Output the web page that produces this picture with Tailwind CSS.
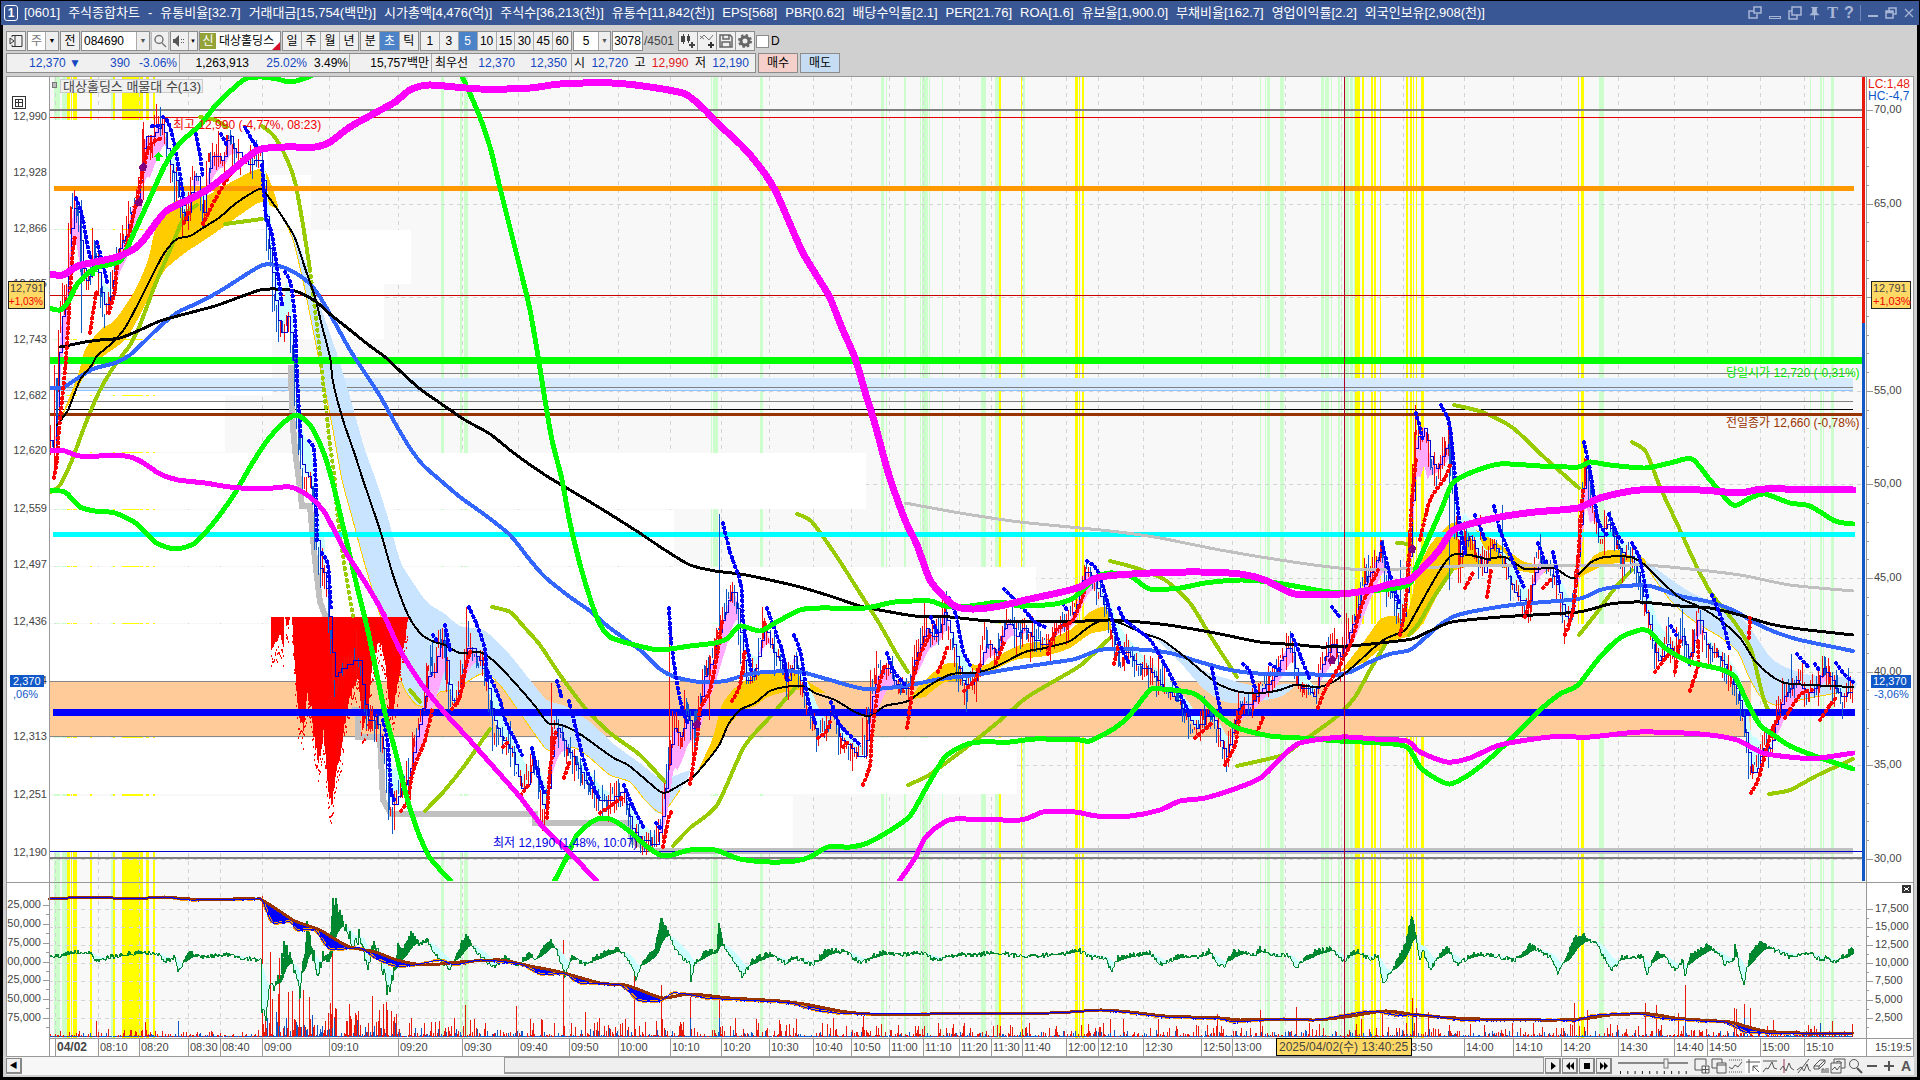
<!DOCTYPE html>
<html lang="ko">
<head>
  <meta charset="UTF-8">
  <meta name="viewport" content="width=device-width, initial-scale=1.0">
  <title>[0601] 주식종합차트</title>
  <script src="https://cdn.jsdelivr.net/npm/@tailwindcss/browser@4"></script>
</head>
<body class="bg-black font-['Liberation_Sans','Noto_Sans_CJK_KR',sans-serif] text-xs text-black">
  <div class="bg-black pt-px pb-[3px]">
    <!-- title bar -->
    <header class="mx-px flex h-6 items-center bg-[#3a5795] pl-[3px] pr-1 text-white">
      <span class="flex h-4 w-[14px] items-center justify-center rounded-[3px] border border-white font-bold leading-none">1</span>
      <h1 class="ml-[6px] flex flex-1 gap-2 overflow-hidden whitespace-nowrap text-[13px] leading-5">
        <span>[0601]</span><span>주식종합차트</span><span>-</span><span>유통비율[32.7]</span><span>거래대금[15,754(백만)]</span><span>시가총액[4,476(억)]</span><span>주식수[36,213(천)]</span><span>유통수[11,842(천)]</span><span>EPS[568]</span><span>PBR[0.62]</span><span>배당수익률[2.1]</span><span>PER[21.76]</span><span>ROA[1.6]</span><span>유보율[1,900.0]</span><span>부채비율[162.7]</span><span>영업이익률[2.2]</span><span>외국인보유[2,908(천)]</span>
      </h1>
      <div class="flex items-center gap-[6px] text-[#a9b7d6]">
        <button aria-label="팝업"><svg class="size-[14px]" viewBox="0 0 14 14" fill="none" stroke="currentColor" stroke-width="1.5"><path d="M6 1h7v6H6zM6 5H1v7h8V8"/></svg></button>
        <button aria-label="접기"><svg class="size-[14px]" viewBox="0 0 14 14" fill="none" stroke="currentColor"><rect x="1.500" y="10.500" width="11" height="2"/></svg></button>
        <button aria-label="복사"><svg class="size-[14px]" viewBox="0 0 14 14" fill="none" stroke="currentColor" stroke-width="1.500"><path d="M4 1h9v8H4zM4 5H1v8h8V9"/></svg></button>
        <button aria-label="고정"><svg class="size-[13px]" viewBox="0 0 13 14" fill="currentColor"><path d="M3 0h7v1H9v5l3 3H7v5H6V9H1l3-3V1H3z"/></svg></button>
        <button class="w-[11px] font-['Liberation_Serif',serif] text-base font-bold leading-4">T</button>
        <button class="w-[10px] text-base font-bold leading-4">?</button>
        <span class="h-4 w-px bg-[#7186b5]"></span>
        <button aria-label="최소화"><svg class="size-3" viewBox="0 0 12 12" fill="currentColor"><rect x="1" y="8" width="10" height="2"/></svg></button>
        <button aria-label="복원"><svg class="size-3" viewBox="0 0 12 12" fill="none" stroke="currentColor" stroke-width="1.500"><path d="M4 4V1h7v6H8M1 4h7v7H1zM1 5.500h7"/></svg></button>
        <button aria-label="닫기"><svg class="size-3" viewBox="0 0 12 12" fill="none" stroke="currentColor" stroke-width="1.200"><path d="M2 2l8 8M10 2l-8 8"/></svg></button>
      </div>
    </header>

    <div class="ml-[3px] mr-[3px] bg-[#d0d0d0] pl-[3px] pr-[3px] pb-[2px]">
      <!-- toolbar -->
      <div class="flex h-[28px] items-center gap-px pt-1 [&_button]:shrink-0">
        <button aria-label="메뉴" class="flex h-5 w-5 items-center justify-center border border-[#8c8c8c] bg-[#f0f0f0]"><svg class="size-[14px]" viewBox="0 0 14 14" fill="none" stroke="#333"><path d="M3 3V1.500h10v11H3V11M6 1.500v11M1 4l4 3-4 3z"/></svg></button>
        <div class="flex h-5 w-8 border border-[#8c8c8c] bg-white"><span class="w-[17px] text-center leading-[18px] text-[#777]">주</span><button aria-label="구분 선택" class="flex-1 border-l border-[#aaa] bg-[#eee] text-[7px]">▼</button></div>
        <button class="h-5 w-5 border border-[#8c8c8c] bg-[#f0f0f0] leading-[18px]">전</button>
        <div class="flex h-5 w-[69px] border border-[#8c8c8c] bg-white"><input aria-label="종목코드" value="084690" class="w-[54px] pl-[2px] text-xs outline-none"><button aria-label="종목 선택" class="flex-1 border-l border-[#aaa] bg-[#eee] text-[7px] text-[#555]">▼</button></div>
        <button aria-label="검색" class="flex h-5 w-[18px] items-center justify-center border border-[#bbb] bg-[#f0f0f0]"><svg class="size-[14px]" viewBox="0 0 14 14" fill="none" stroke="#777" stroke-width="1.500"><circle cx="6" cy="5.500" r="4"/><path d="M9 9l4 4"/></svg></button>
        <div class="flex h-5 w-[28px] border border-[#8c8c8c] bg-[#f0f0f0]"><button aria-label="소리" class="w-[17px]"><svg class="ml-px size-[14px]" viewBox="0 0 14 14" fill="#555"><path d="M1 5h2l4-4v12L3 9H1zM9 5h1v1H9zM9 8h1v1H9zM11 5h1v1h-1zM11 8h1v1h-1z"/></svg></button><button aria-label="소리 선택" class="flex-1 border-l border-[#aaa] text-[6px]">▼</button></div>
        <div class="relative flex h-5 w-[82px] items-center overflow-hidden whitespace-nowrap border border-[#8c8c8c] bg-white"><span class="h-4 w-4 shrink-0 bg-[#93a338] text-center leading-4 text-white">신</span><span class="ml-[3px]">대상홀딩스</span><svg class="absolute bottom-0 right-0 size-2" viewBox="0 0 8 8"><path d="M8 0v8H0z" fill="#d8102a"/></svg></div>
        <div class="flex h-5 w-[77px] divide-x divide-[#aaa] border border-[#8c8c8c] bg-[#f0f0f0] *:flex-1 *:leading-[18px]"><button>일</button><button>주</button><button>월</button><button>년</button></div>
        <div class="flex h-5 w-[59px] divide-x divide-[#aaa] border border-[#8c8c8c] bg-[#f0f0f0] *:flex-1 *:leading-[18px]"><button>분</button><button class="bg-[#4c83c8] text-white">초</button><button>틱</button></div>
        <div class="flex h-5 w-[152px] divide-x divide-[#aaa] border border-[#8c8c8c] bg-[#f0f0f0] *:flex-1 *:leading-[18px]"><button>1</button><button>3</button><button class="bg-[#4c83c8] text-white">5</button><button>10</button><button>15</button><button>30</button><button>45</button><button>60</button></div>
        <div class="flex h-5 w-[38px] border border-[#8c8c8c] bg-white"><input aria-label="간격" value="5" class="w-6 text-center text-xs outline-none"><button aria-label="간격 선택" class="flex-1 border-l border-[#aaa] bg-[#eee] text-[7px] text-[#555]">▼</button></div>
        <input aria-label="조회 개수" value="3078" class="h-5 w-[31px] border border-[#8c8c8c] bg-white text-center text-xs outline-none">
        <span class="w-[33px] text-[#444]">/4501</span>
        <div class="flex h-5 w-[77px] divide-x divide-[#999] border border-[#8c8c8c] bg-[#f0f0f0] *:flex *:flex-1 *:items-center *:justify-center">
          <button aria-label="봉 추가"><svg class="size-4" viewBox="0 0 16 16" fill="#444"><path d="M1 3h4v6H1zM3 1h1v10H3zM7 3h3v5H7zM8 1h1v9H8zM11 9h2v2h2v2h-2v2h-2v-2H9v-2h2z"/></svg></button>
          <button aria-label="지표 추가"><svg class="size-4" viewBox="0 0 16 16" fill="none" stroke="#777"><path d="M1 6l4-4 5 5 4-5M1 3l4 3"/><path d="M12 9v6M9 12h6" stroke="#333" stroke-width="2"/></svg></button>
          <button aria-label="저장"><svg class="size-4" viewBox="0 0 16 16" fill="none" stroke="#666" stroke-width="1.500"><path d="M2 2h10l2 2v10H2zM5 2v4h6V2M4 14V9h8v5"/></svg></button>
          <button aria-label="설정"><svg class="size-4" viewBox="0 0 16 16" fill="none" stroke="#666"><circle cx="8" cy="8" r="4" stroke-width="3"/><circle cx="8" cy="8" r="6" stroke-width="2" stroke-dasharray="2.400 2.300"/></svg></button>
        </div>
        <label class="flex items-center gap-[2px]"><input type="checkbox" class="size-[13px] appearance-none border border-[#8c8c8c] bg-white">D</label>
      </div>

      <!-- quote line -->
      <div class="flex h-[23px] gap-[2px] pb-[3px] text-xs leading-[18px] text-[#1548c0]">
        <div class="flex w-[750px] shrink-0 divide-x divide-[#aaa] whitespace-nowrap border border-[#8c8c8c] bg-[#f0f0f0]">
          <div class="flex w-[173px] justify-end pr-[2px]"><span>12,370 ▼</span><span class="w-[49px] text-right">390</span><span class="w-[47px] text-right">-3.06%</span></div>
          <div class="flex w-[170px] justify-end pr-[1px]"><span class="text-black">1,263,913</span><span class="w-[58px] text-right">25.02%</span><span class="w-[41px] text-right text-black">3.49%</span></div>
          <div class="w-[82px] pr-[2px] text-right text-black">15,757백만</div>
          <div class="flex w-[140px] justify-end pr-1"><span class="flex-1 pl-[3px] text-black">최우선</span><span>12,370</span><span class="w-[52px] text-right">12,350</span></div>
          <div class="flex flex-1 justify-between pl-[2px] pr-[6px]"><span class="text-black">시</span><span>12,720</span><span class="text-black">고</span><span class="text-[#e01818]">12,990</span><span class="text-black">저</span><span>12,190</span></div>
        </div>
        <button class="h-5 w-10 border border-[#8c8c8c] bg-[#f5d0cb] text-black">매수</button>
        <button class="h-5 w-10 border border-[#8c8c8c] bg-[#c5dcf2] text-black">매도</button>
      </div>

      <!-- chart -->
      <svg id="chart" class="block h-auto w-full" viewBox="6 76 1908 981" shape-rendering="crispEdges">
        <rect x="6" y="76" width="1908" height="981" fill="#fff"/>
        <rect x="49" y="77" width="1818" height="961" fill="#f8f8f8"/>
        <g id="back"></g>
        <clipPath id="plot"><rect x="49" y="77" width="1813" height="804"/></clipPath>
        <g id="main" clip-path="url(#plot)"></g>
        <g id="sub"></g>
        <g fill="none" stroke="#999" stroke-width="1"><path d="M6.500 76.500h1907v980H6.500zM49.500 77v980M1866.500 77v980M6 882.500h1907M49 1038.500h1864"/></g>
        <rect x="1862" y="77" width="3" height="246" fill="#e81a0c"/>
        <rect x="1862" y="323" width="3" height="558" fill="#1058c8"/>
        <g id="labels"></g>
      </svg>

      <!-- scroll bar and drawing tools -->
      <footer class="flex h-[18px] items-center bg-[#f0f0f0] [&_button]:shrink-0">
        <button class="h-4 w-4 border border-r-2 border-b-2 border-[#888] bg-[#f0f0f0] text-[8px] leading-none">◀</button>
        <div class="flex h-full flex-1 bg-[#f7f7f7] pl-[482px]"><div class="h-[17px] flex-1 border border-b-2 border-[#999] bg-[#efefef]"></div></div>
        <div class="flex gap-px pl-px">
          <button class="flex h-4 w-4 items-center justify-center border border-r-2 border-b-2 border-[#888]" aria-label="재생"><svg class="size-2" viewBox="0 0 8 8"><path d="M2 0l5 4-5 4z"/></svg></button>
          <button class="flex h-4 w-4 items-center justify-center border border-r-2 border-b-2 border-[#888]" aria-label="뒤로"><svg class="size-2" viewBox="0 0 8 8"><path d="M4 0v8L0 4zM8 0v8L4 4z"/></svg></button>
          <button class="flex h-4 w-4 items-center justify-center border border-r-2 border-b-2 border-[#888]" aria-label="정지"><svg class="size-[6px]" viewBox="0 0 6 6"><path d="M0 0h6v6H0z"/></svg></button>
          <button class="flex h-4 w-4 items-center justify-center border border-r-2 border-b-2 border-[#888]" aria-label="앞으로"><svg class="size-2" viewBox="0 0 8 8"><path d="M0 0l4 4-4 4zM4 0l4 4-4 4z"/></svg></button>
        </div>
        <svg class="mx-[6px] h-[18px] w-[70px]" viewBox="0 0 70 18"><path d="M0 5h70v2H0z" fill="#888"/><rect x="46" y="2" width="4" height="9" fill="#eee" stroke="#777"/><path d="M2.500 14v3m7.300-3v3m7.300-3v3m7.300-3v3m7.300-3v3m7.300-3v3m7.300-3v3m7.300-3v3m7.300-3v3m7.300-3v3" stroke="#222"/></svg>
        <div class="flex w-[220px] justify-between text-[#555] [&_svg]:size-4 [&_svg]:fill-none [&_svg]:stroke-current">
          <button aria-label="차트 추가"><svg viewBox="0 0 16 16"><path d="M9 12H1V1h11v6M8 8h7v7H8zM11.500 8v7M8 11.500h7"/></svg></button>
          <button aria-label="차트 겹침"><svg viewBox="0 0 16 16"><path d="M6 10H1V1h10v4"/><path d="M6 5h9v10H6zM6 7h9"/></svg></button>
          <button aria-label="영역"><svg viewBox="0 0 16 16"><path d="M1 2h14M1 14h14" stroke-dasharray="1 1"/><path d="M1 9l3 2 3-4 3 2 4-5"/></svg></button>
          <button aria-label="십자선" class="bg-white"><svg viewBox="0 0 16 16"><path d="M1 4h14M4 1v14M8 8l6 6M8 13V8h5"/></svg></button>
          <button aria-label="수평선"><svg viewBox="0 0 16 16"><path d="M1 3h14M1 14l3-4 2 1 4-7 2 6 3 1"/></svg></button>
          <button aria-label="수직선"><svg viewBox="0 0 16 16"><path d="M5 1v14" stroke="#a03060"/><path d="M1 12l3-4 3 5 3-8 2 5 3 2"/></svg></button>
          <button aria-label="추세선"><svg viewBox="0 0 16 16"><path d="M2 15L13 1M1 12l4-3 3 4 3-7 2 6 2 1"/></svg></button>
          <button aria-label="지우기"><svg viewBox="0 0 16 16"><path d="M1 8l6-6h5l-6 6zM1 8v3h5l6-6V2M6 8v3M9 15v-4h2v4M13 10v5M15 10v5"/></svg></button>
          <button aria-label="그림 저장"><svg viewBox="0 0 16 16"><path d="M4 5V1h11v9h-4M1 5h10v10H1zM2 12l3-3 2 3 3-4M6 4l3-1 3 2"/></svg></button>
          <button aria-label="확대경"><svg viewBox="0 0 16 16"><circle cx="7" cy="6" r="4.500"/><path d="M10 10l5 5" stroke-width="2"/></svg></button>
          <button aria-label="축소"><svg viewBox="0 0 16 16"><path d="M3 8h10" stroke-width="2"/></svg></button>
          <button aria-label="확대"><svg viewBox="0 0 16 16"><path d="M3 8h10M8 3v10" stroke-width="2"/></svg></button>
          <button class="w-4 text-sm font-bold leading-4">A</button>
        </div>
      </footer>
    </div>
  </div>

  <script>
    const back = [], main = [], sub = [], labels = [];

    // repeatable noise
    let seed = 7;
    function rnd() { seed = (seed * 16807) % 2147483647; return seed / 2147483647; }

    function parse(s) { return s.trim().split(/\s+/).map(p => p.split(',').map(Number)); }

    function smooth(pts) {
      let d = `M${pts[0]}`;
      for (let i = 0; i < pts.length - 1; i++) {
        const a = pts[i - 1] || pts[i], b = pts[i], c = pts[i + 1], e = pts[i + 2] || c;
        d += `C${b[0] + (c[0] - a[0]) / 8},${b[1] + (c[1] - a[1]) / 8} ${c[0] - (e[0] - b[0]) / 8},${c[1] - (e[1] - b[1]) / 8} ${c}`;
      }
      return d;
    }
    function curve(out, s, color, w, extra = '') {
      out.push(`<path d="${smooth(parse(s))}" fill="none" stroke="${color}" stroke-width="${w}" stroke-linecap="round" stroke-linejoin="round" ${extra}/>`);
    }
    function area(s, color) { main.push(`<path d="${smooth(parse(s))}Z" fill="${color}"/>`); }
    function rect(out, x, y, w, h, color) { out.push(`<rect x="${x}" y="${y}" width="${w}" height="${h}" fill="${color}"/>`); }
    function text(x, y, s, color, extra = '', size = 11) { labels.push(`<text x="${x}" y="${y}" fill="${color}" font-size="${size}" ${extra}>${s}</text>`); }
    function sample(s, step) {
      const p = parse(s), out = [];
      let k = 0;
      for (let x = p[0][0]; x <= p[p.length - 1][0]; x += step) {
        while (k < p.length - 2 && x > p[k + 1][0]) k++;
        const [a, b] = [p[k], p[k + 1]];
        out.push([x, a[1] + (b[1] - a[1]) * (x - a[0]) / (b[0] - a[0])]);
      }
      return out;
    }

    // signal strips: x, width
    const GREEN = '54,6 62,5 111,2 441,3 460,2 464,4 711,1 713,5 760,3 881,3 886,1 904,2 920,1 922,6 929,1 942,1 981,5 995,4 1023,2 1260,1 1265,1 1267,3 1280,4 1321,3 1325,4 1331,1 1338,2 1341,1 1345,4 1350,3 1354,1 1599,5 1810,1 1820,2 1823,1 1831,3';
    const YELLOW = '67,3 71,1 73,4 90,2 113,2 122,21 146,3 153,2 999,2 1021,1 1075,3 1079,1 1082,2 1355,5 1362,2 1371,2 1374,2 1380,1 1406,2 1410,2 1413,1 1416,1 1421,3 1578,1 1581,3';
    parse(GREEN).forEach(([x, w]) => rect(back, x, 77, w, 961, '#ccffcc'));
    parse(YELLOW).forEach(([x, w]) => rect(back, x, 77, w, 961, '#ffff00'));

    const TIMES = [[55,'04/02'],[98,'08:10'],[139,'08:20'],[188,'08:30'],[220,'08:40'],[262,'09:00'],[329,'09:10'],[398,'09:20'],[462,'09:30'],[518,'09:40'],[569,'09:50'],[618,'10:00'],[670,'10:10'],[721,'10:20'],[769,'10:30'],[813,'10:40'],[851,'10:50'],[889,'11:00'],[923,'11:10'],[959,'11:20'],[991,'11:30'],[1022,'11:40'],[1066,'12:00'],[1098,'12:10'],[1143,'12:30'],[1201,'12:50'],[1232,'13:00'],[1285,''],[1341,''],[1403,'13:50'],[1464,'14:00'],[1513,'14:10'],[1561,'14:20'],[1618,'14:30'],[1674,'14:40'],[1707,'14:50'],[1760,'15:00'],[1804,'15:10']];
    let grid = '';
    TIMES.forEach(([x]) => grid += `M${x + .5} 77V1038`);
    [204,297,391,484,578,672,765,859,909,927,945,963,981,1000,1018].forEach(y => grid += `M49 ${y + .5}H1862`);
    back.push(`<path d="${grid}" stroke="#d4d4d4" stroke-dasharray="4 4"/>`);

    // volume-by-price blocks: y, height, right edge
    const PROFILE = [[120,55,267],[175,54,311],[230,54,411],[284,55,384],[340,55,272],[396,56,225],[453,56,866],[510,56,674],[567,56,1036],[624,57,1751],[738,56,1017],[796,55,793]];
    PROFILE.forEach(([y, h, r]) => rect(back, 49, y, r - 49, h, '#fff'));
    rect(main, 49, 681, 1702, 55, '#ffcc99');
    main.push('<path d="M49 681.500H1751M49 736.500H1751" stroke="#888"/>');

    // price levels
    rect(main, 55, 378, 1798, 12, '#d6eaff');
    rect(main, 55, 390, 1798, 1, '#90c4ff');
    [[373,'#808080'],[387,'#808080'],[401,'#808080'],[409,'#000']].forEach(([y, c]) => rect(main, 55, y, 1798, 1, c));
    rect(main, 49, 109, 1815, 2, '#808080');
    rect(main, 49, 117, 1813, 1, '#e00000');
    rect(main, 49, 295, 1813, 1, '#c80000');

    // bands round the middle average
    area('60,420 78,375 85,350 100,330 115,320 135,290 148,260 155,230 165,210 178,200 205,196 235,180 255,170 266,172 278,208 261,202 240,215 215,233 200,243 185,253 165,270 150,295 140,315 125,340 105,355 85,375', '#ffcc00');
    area('280,212 295,235 310,275 316,295 327,325 338,357 350,397 365,450 376,480 388,518 400,560 410,578 427,602 445,614 460,626 485,631 510,655 530,680 547,700 565,706 590,722 615,745 640,763 662,779 690,772 662,813 645,800 630,782 610,775 590,758 575,748 555,750 545,748 520,713 500,685 485,673 470,680 455,690 440,692 430,705 417,705 405,690 395,663 380,615 365,565 352,517 342,480 333,430 325,390 315,340 305,290 293,240', '#c8e4ff');
    area('697,772 712,740 722,705 735,688 757,673 775,671 795,672 812,684 825,693 803,690 785,692 768,697 755,706 742,711 728,727 718,748', '#ffcc00');
    area('908,700 925,680 945,664 960,663 985,665 1000,655 1020,645 1045,640 1070,630 1090,612 1107,607 1112,628 1090,634 1070,648 1045,656 1015,660 990,672 970,680 945,682 925,697', '#ffcc00');
    area('1340,672 1365,640 1382,618 1405,615 1411,600 1418,570 1430,545 1452,523 1470,527 1490,538 1510,552 1525,562 1550,567 1540,574 1505,568 1480,565 1453,571 1440,590 1425,620 1412,635 1390,642 1365,662', '#ffcc00');
    area('1575,580 1595,555 1612,550 1635,553 1650,565 1630,562 1605,565 1590,572', '#ffcc00');
    area('1150,632 1185,655 1205,671 1225,678 1245,684 1265,686 1295,684 1280,697 1250,702 1225,702 1205,690 1185,668', '#c8e4ff');
    area('1645,560 1665,575 1690,592 1720,605 1742,618 1755,635 1770,657 1785,667 1810,675 1853,678 1853,690 1815,697 1790,702 1775,705 1760,696 1748,675 1738,652 1720,637 1695,622 1670,600 1650,572', '#c8e4ff');
    curve(main, '280,212 293,240 305,290 315,340 325,390 333,430 342,480 352,517 365,565 380,615 395,663 405,690 417,705 430,705 440,692 455,690 470,680 485,673 500,685 520,713 545,748 555,750 575,748 590,758 610,775 630,782 645,800 662,813 680,790', '#ffcc00', 1);
    curve(main, '1650,572 1670,600 1695,622 1720,637 1738,652 1748,675 1760,696 1775,705 1790,702 1815,697 1853,690', '#ffcc00', 1);

    // low channel
    main.push('<path d="M291 365L292 415 295 450 299 480 302 506H310L315 560 320 602 327 620" fill="none" stroke="#c0c0c0" stroke-width="6"/>');
    main.push('<path d="M352 710H358V737H380L383 800 391 814H535V823H628L633 842 655 851H1853" fill="none" stroke="#c0c0c0" stroke-width="6"/>');

    // red block hanging at 12,436
    let red = '';
    const BLOB = sample('271,650 276,648 280,640 283,650 284,617 286,633 290,620 291,617 296,695 298,722 303,732 307,700 311,712 313,738 318,768 323,738 328,795 331,812 336,775 341,755 346,716 352,696 358,680 362,735 368,715 372,668 379,645 384,660 388,705 392,722 397,690 400,670 408,622', 1);
    BLOB.forEach(([x, y]) => {
      red += `M${x + .5} 617V${Math.max(617, y - rnd() * 8)}`;
      for (let i = 0; i < 2; i++) if (y > 625) red += `M${x + .5} ${y + rnd() * 16}v2`;
    });
    main.push(`<path d="${red}" stroke="#ff0000"/>`);

    // price path
    const PRICE = '50,440 54,455 55,410 57,340 60,310 63,298 66,290 69,220 72,200 75,197 79,240 81,290 84,270 86,293 89,270 92,245 95,262 100,300 104,313 110,290 115,255 120,240 125,235 130,205 137,195 140,165 143,130 150,140 155,127 162,120 165,150 170,175 175,180 180,215 185,223 190,190 193,165 197,180 203,223 206,165 210,155 216,152 222,165 225,140 228,130 232,150 240,155 247,165 255,160 261,163 263,200 267,250 270,270 273,300 278,330 283,345 285,300 290,345 293,380 296,415 298,450 302,480 307,475 310,490 313,520 317,555 320,585 323,570 327,610 330,650 333,690 337,670 345,665 352,660 358,655 362,700 367,730 373,710 378,735 384,760 388,800 392,812 398,790 403,780 408,775 413,740 420,710 425,690 428,660 432,680 437,645 443,635 447,690 452,710 460,680 466,640 472,650 480,665 487,690 492,725 500,740 510,750 517,780 521,795 528,775 532,750 537,780 542,820 546,800 550,740 556,722 563,745 572,760 580,775 590,790 598,802 610,798 622,790 630,830 640,840 655,845 660,820 665,770 670,740 672,720 680,740 685,710 690,730 697,720 702,670 712,660 718,625 723,615 730,585 735,600 740,650 745,690 752,670 757,655 763,620 770,650 780,665 785,690 793,650 798,680 803,700 810,720 817,740 825,730 830,705 838,740 845,745 852,750 860,760 864,750 868,700 875,675 885,665 892,680 900,690 907,690 912,660 920,640 925,625 933,640 938,630 943,605 950,640 957,670 964,690 975,675 985,640 995,655 1000,630 1008,620 1015,640 1022,625 1030,640 1045,645 1055,625 1065,625 1075,605 1080,575 1085,570 1092,580 1100,600 1107,615 1115,655 1125,650 1135,665 1147,670 1155,680 1165,690 1175,700 1185,715 1195,730 1205,715 1213,720 1220,745 1225,760 1230,730 1238,700 1248,705 1258,690 1270,680 1283,650 1290,645 1297,690 1307,690 1312,700 1318,670 1326,650 1332,640 1338,660 1345,640 1355,610 1362,580 1370,570 1380,545 1387,590 1393,600 1400,630 1404,600 1408,550 1412,460 1415,420 1419,440 1423,420 1428,460 1435,470 1440,455 1448,440 1453,510 1458,570 1463,545 1467,530 1475,555 1483,575 1490,540 1495,550 1503,560 1510,590 1520,600 1527,610 1532,570 1540,555 1550,570 1560,600 1566,630 1572,590 1577,540 1582,480 1584,450 1590,500 1598,545 1605,520 1613,540 1620,555 1630,555 1640,590 1650,640 1657,665 1665,640 1673,660 1680,630 1688,665 1697,610 1705,650 1715,655 1725,670 1735,690 1745,740 1750,780 1756,770 1762,740 1770,750 1775,710 1785,690 1795,680 1805,695 1813,690 1822,665 1830,680 1840,700 1847,690 1853,690';
    const price = sample(PRICE, 1);
    let fast = price[0][1], slow = fast, up = '', down = '', pink = '', cyan = '', step = '';
    let prev = fast;
    price.forEach(([x, y], i) => {
      fast += (y - fast) * .35;
      slow += (y - slow) * .07;
      const a = Math.min(fast, slow), b = Math.max(fast, slow);
      if (fast < slow) pink += `M${x + .5} ${a}V${Math.min(b, a + 40)}`;
      else if (x < 325 || x > 385) cyan += `M${x + .5} ${b}V${Math.max(a, b - 36)}`;
      if (i % 2 === 0) {
        const q = Math.round((y + (rnd() - .5) * 20) / 9) * 9;
        const seg = `M${x + .5} ${Math.min(prev, q) - rnd() * rnd() * 20}V${Math.max(prev, q) + rnd() * rnd() * 20}`;
        const body = rnd() > .8 ? `M${x + 1.5} ${Math.min(prev, q)}V${Math.max(prev, q)}` : '';
        if (rnd() > (q < prev ? .15 : .6)) up += seg + body; else down += seg + body;
        prev = q;
      }
      if (i % 3 === 0) step += (step ? 'H' + x + 'V' : `M${x} `) + Math.round(fast / 4) * 4;
    });
    main.push(`<path d="${pink}" stroke="#ffaaff"/><path d="${cyan}" stroke="#ccffff"/>`);

    // trend channels
    ['49,493 60,485 72,460 85,425 100,390 115,365 130,345 140,325 155,285 170,250 185,215 197,205', '200,117 215,120 227,127', '225,224 262,219',
     '262,126 273,135 285,155 295,182 303,225 310,270', '410,690 420,702', '425,811 445,790 465,765 490,729',
     '492,607 510,612 525,628 540,645 560,675 585,708 610,733 640,755 665,782', '673,846 690,828 717,805 744,747 770,717 795,688',
     '797,514 812,522 837,557 858,590 879,623 896,653 908,672', '908,785 929,775 963,750 997,723 1026,698 1056,680 1081,665 1110,638',
     '1110,561 1136,568 1165,580 1190,603 1211,637 1226,660 1237,677', '1237,766 1283,755 1300,743 1335,718 1355,697 1370,670 1385,645',
     '1397,543 1411,544', '1409,635 1419,623 1434,597 1452,570', '1454,405 1482,412 1513,428 1545,458 1579,488', '1579,635 1595,615 1615,588 1632,570',
     '1632,442 1646,452 1660,487 1680,530 1695,563 1711,593 1735,623 1751,650 1763,697 1769,712', '1769,794 1790,790 1818,775 1853,759'
    ].forEach(s => curve(main, s, '#99cc00', 4));
    curve(main, '310,270 318,335 325,400 330,445 334,473 338,520 345,570 353,616', '#99cc00', 4, 'stroke-dasharray="1 5"');

    rect(main, 54, 186, 1800, 5, '#ff9900');
    rect(main, 49, 357, 1813, 7, '#00ff00');
    rect(main, 49, 413, 1813, 3, '#993300');
    rect(main, 53, 532, 1802, 5, '#00ffff');
    rect(main, 53, 709, 1802, 7, '#0000ff');
    rect(main, 49, 851, 1813, 1, '#0000c8');
    rect(main, 49, 857, 1815, 2, '#808080');

    main.push(`<path d="${down}" stroke="#1058c8"/><path d="${up}" stroke="#f01010"/><path d="${step}" fill="none" stroke="#0000d0"/>`);
    // long single-bar spikes
    main.push('<path d="M81.500 200V333M719.500 514V640M1449.500 430V590M1502.500 505V560M1791.500 654V690M1400.500 560V630M445.500 640V680" stroke="#1058c8"/>');
    main.push('<path d="M669.500 608V770M54.500 365V478M143.500 122V200M1415.500 405V460M551.500 683V760M466.500 607V650M709.500 655V720M862.500 718V755M1480.500 515V540M942.500 600V640" stroke="#f01010"/>');

    // moving averages
    curve(main, '905,503 960,513 1020,522 1110,531 1160,538 1220,550 1300,563 1350,569 1400,569 1460,566 1530,565 1578,566 1640,565 1680,568 1740,575 1790,585 1853,591', '#c0c0c0', 3);
    curve(main, '49,388 62,388 75,380 93,369 115,363 130,355 150,336 165,322 180,311 200,302 225,288 250,272 263,265 275,265 292,271 308,282 320,297 335,323 350,350 365,373 380,396 395,423 410,448 423,465 440,480 460,497 485,515 510,535 530,560 545,577 570,597 590,611 610,628 640,650 660,669 675,677 700,682 725,681 745,675 765,672 800,672 830,680 865,689 905,686 940,679 975,675 1010,669 1050,663 1075,659 1100,650 1130,649 1170,653 1200,662 1230,670 1265,674 1300,674 1335,675 1350,672 1370,662 1390,654 1410,650 1425,638 1440,625 1455,616 1480,610 1520,604 1578,599 1600,590 1625,586 1650,586 1680,596 1710,602 1735,611 1755,623 1775,632 1800,640 1853,651', '#3366ff', 4);
    curve(main, '60,347 85,342 100,340 120,338 140,330 160,321 185,314 215,306 240,297 260,290 275,289 295,291 315,301 330,314 350,330 370,346 385,357 400,371 420,389 440,403 465,420 490,434 515,454 545,475 570,490 600,508 635,530 665,550 690,565 715,571 740,574 770,580 800,587 830,596 860,606 885,611 915,616 950,617 990,621 1050,622 1085,621 1110,620 1140,622 1175,626 1220,634 1260,642 1300,645 1320,647 1350,646 1380,643 1412,639 1430,631 1452,622 1500,617 1578,612 1610,604 1640,602 1680,606 1710,608 1740,615 1770,624 1800,629 1853,635', '#000', 3);
    curve(main, '57,425 68,410 80,380 92,365 97,356 112,343 125,328 140,300 155,270 165,252 177,239 190,236 203,228 220,217 235,204 250,194 261,189 270,199 285,221 295,238 305,268 315,297 322,326 330,357 333,382 343,420 355,455 363,480 380,530 393,575 408,615 420,633 432,641 445,645 460,653 480,652 495,662 515,683 535,706 548,723 562,725 580,734 612,757 628,765 645,779 663,793 680,785 695,775 718,747 728,725 740,710 755,703 770,691 785,687 803,686 815,693 835,700 855,712 870,716 885,706 908,701 930,685 952,674 975,673 995,667 1025,652 1045,648 1070,641 1090,626 1105,620 1120,623 1145,634 1162,640 1185,657 1205,674 1220,685 1240,692 1260,693 1280,690 1295,685 1318,687 1335,681 1355,665 1370,651 1385,639 1405,630 1415,614 1430,587 1442,567 1452,555 1470,555 1487,559 1505,557 1525,569 1553,568 1567,576 1575,578 1590,563 1605,557 1630,557 1645,565 1660,580 1680,598 1700,607 1720,620 1740,638 1755,661 1770,675 1785,683 1810,685 1853,687', '#000', 2);

    // parabolic dots
    ['54,478 57,460 59,430 62,400 65,370 68,330 72,260 75,235', '90,333 95,300 97,290', '109,313 115,290 117,265 125,250 130,230 137,200 142,175 148,150 153,142 162,138', '184,223 190,210', '203,224 215,200 230,175 245,162', '401,811 408,800 411,780 415,765 425,740 432,710', '452,709 460,697 466,665 471,650', '503,747 510,740', '521,795 530,783', '547,818 550,770 556,730', '564,778 570,760', '600,813 612,805 623,797', '663,847 668,820 672,810', '690,784 697,740 700,710 710,690 718,650 722,620', '732,701 740,685 745,650', '818,738 826,732 830,722', '843,747 850,740', '863,785 870,765 872,735 878,690 885,665', '907,728 911,700 913,680 920,655 930,635', '938,672 943,660 948,645', '964,691 975,680 980,665', '996,663 1005,640', '1048,654 1056,630 1073,620 1085,590', '1114,664 1120,640', '1195,738 1213,722', '1225,765 1235,745 1240,715 1245,705', '1257,733 1264,715', '1318,708 1325,690 1340,665 1352,640 1362,605 1378,570', '1400,635 1405,610 1409,560 1412,500 1416,460', '1420,540 1430,500 1445,478 1450,465', '1465,588 1473,573', '1487,597 1491,570', '1525,617 1530,600', '1543,588 1552,578', '1565,635 1573,610 1578,560 1583,490', '1655,672 1668,655', '1675,672 1680,640', '1690,691 1698,665 1698,640', '1749,638 1750,618', '1751,793 1758,780 1765,755 1772,730 1780,715', '1785,718 1800,695 1812,690', '1820,720 1830,705 1837,697'
    ].forEach(s => curve(main, s, '#ff0000', 4, 'stroke-dasharray="1 4"'));
    ['152,126 158,126', '163,117 168,122 174,142 180,175 185,207', '196,134 200,155 203,178', '221,134 227,145', '245,127 252,140 261,152', '76,198 82,215 88,248 91,260', '97,242 103,265 108,285', '262,165 266,215 272,235 278,275 282,305', '285,272 291,285 295,320 297,375 299,410 301,440', '309,441 314,450 316,490 317,540', '322,553 328,565 331,610', '383,720 388,745 391,790 394,800', '433,635 438,643', '445,625 450,650', '469,607 477,625 485,650 487,680', '488,672 500,700 505,720 515,740 522,755', '532,748 537,770 545,795', '557,681 562,698', '569,701 575,725 585,765 595,790 600,800', '624,785 632,805 645,830', '656,823 662,830', '669,608 671,640 675,670 680,700 688,725', '723,523 730,552 741,585 743,620 747,645 751,670', '767,608 773,625 782,650 788,680', '794,635 801,655 808,700 816,725', '831,702 840,725 860,745', '887,653 893,670 905,685', '931,617 938,635', '949,598 956,615 963,650 970,665', '1004,589 1020,605 1035,622 1048,628', '1063,604 1068,611', '1087,561 1097,570 1107,600 1118,640 1130,665', '1119,608 1125,620 1150,640 1165,665 1178,690 1190,715', '1212,668 1220,710', '1243,664 1250,672 1257,695', '1270,664 1280,670', '1292,635 1300,655 1310,680', '1332,607 1339,616', '1382,543 1390,575 1400,605', '1416,413 1423,440', '1441,405 1449,422 1453,455 1458,510 1465,555', '1475,515 1485,540', '1494,506 1500,530 1510,555 1525,590', '1538,543 1545,562', '1553,552 1560,585', '1584,442 1590,470 1598,520 1607,535', '1609,514 1616,532 1622,542', '1632,543 1640,560 1648,600', '1671,626 1676,635', '1712,595 1722,620 1730,650', '1797,654 1809,668', '1815,664 1820,672', '1836,663 1845,675 1853,682'
    ].forEach(s => curve(main, s, '#0000ff', 4, 'stroke-dasharray="1 4"'));

    // bands
    curve(main, '49,308 60,310 68,302 78,283 95,268 120,261 133,235 150,198 165,165 180,143 200,125 215,106 225,96 245,79 262,77 277,79 290,82 303,79 315,74', '#00ff00', 5);
    curve(main, '460,72 478,112 490,147 500,188 510,228 520,268 530,310 538,356 545,400 552,440 562,480 570,523 583,575 598,620 610,637 635,645 660,650 690,646 715,643 728,638 740,626 760,631 775,623 800,610 820,608 865,608 895,602 930,601 945,606 970,606 1000,602 1020,606 1055,604 1075,597 1095,578 1110,573 1130,576 1150,589 1180,588 1205,583 1240,580 1270,582 1300,587 1330,592 1370,591 1408,585 1417,565 1430,535 1442,508 1452,484 1470,473 1500,464 1540,466 1578,467 1590,462 1610,465 1645,468 1670,463 1692,459 1710,480 1733,505 1750,498 1765,494 1790,503 1810,506 1835,521 1853,524', '#00ff00', 5);
    curve(main, '49,491 65,492 80,507 95,511 115,513 137,524 155,542 175,549 195,543 215,521 235,493 250,467 262,448 270,437 283,423 296,415 310,425 323,451 332,480 343,526 355,578 367,627 376,670 385,713 395,750 407,798 418,832 430,858 450,880', '#00ff00', 5);
    curve(main, '555,880 567,857 577,835 595,820 610,819 628,830 645,845 660,855 672,855 690,850 715,850 740,859 770,862 795,861 810,857 828,847 850,847 870,842 908,818 925,790 945,757 965,745 980,742 1010,742 1035,739 1080,740 1090,741 1115,728 1130,715 1150,690 1162,689 1195,694 1215,712 1235,727 1270,736 1300,738 1340,741 1380,743 1407,747 1420,767 1435,778 1450,784 1470,774 1495,754 1520,730 1540,710 1560,694 1578,685 1600,657 1620,638 1640,630 1650,632 1665,648 1690,662 1720,669 1735,677 1748,704 1760,725 1775,736 1790,746 1815,756 1853,769', '#00ff00', 5);
    curve(main, '49,274 63,275 78,266 95,262 120,256 140,244 165,212 190,199 210,188 235,168 258,150 285,147 315,147 330,142 350,127 375,113 395,102 410,90 429,85 480,89 530,88 560,84 612,83 650,87 685,94 705,110 715,121 742,146 760,167 775,190 790,224 803,253 820,281 830,298 842,328 855,358 866,395 875,424 888,472 905,520 917,545 930,580 945,598 957,607 975,609 1000,606 1030,599 1062,592 1080,587 1100,577 1150,573 1200,572 1240,574 1265,580 1295,594 1340,594 1370,590 1390,584 1409,580 1420,571 1440,549 1452,531 1470,524 1500,517 1535,512 1578,508 1600,498 1640,490 1700,490 1740,493 1765,489 1853,490', '#ff00ff', 7);
    curve(main, '49,450 65,451 80,456 125,456 142,462 160,474 178,480 205,483 230,487 262,489 290,487 310,497 325,513 345,551 365,582 383,613 400,650 420,682 445,713 467,737 490,763 520,797 543,827 567,850 596,880', '#ff00ff', 5);
    curve(main, '900,880 915,858 925,838 940,825 955,819 1020,820 1043,812 1075,812 1097,816 1130,816 1160,810 1180,801 1205,798 1240,787 1262,777 1283,756 1300,743 1342,737 1375,739 1407,741 1420,752 1447,762 1470,758 1500,745 1550,737 1590,737 1640,732 1700,734 1737,740 1763,753 1800,758 1820,758 1853,753', '#ff00ff', 5);

    // entry marks
    [[143,167],[139,202],[697,724],[1412,549],[1332,660]].forEach(([x, y]) => main.push(`<path d="M${x} ${y - 5}l4 4-1 5h-6l-1-5z" fill="#800080"/>`));
    [[158,157],[93,272]].forEach(([x, y]) => main.push(`<path d="M${x} ${y - 5}l5 5h-3v4h-4v-4h-3z" fill="#00ff00"/>`));

    // volume
    let vr = '', vb = '';
    for (let x = 50; x < 1853; x += 1) {
      const amp = x < 262 ? 7 : x < 275 ? 38 : x < 330 ? 46 : x < 400 ? 34 : x < 560 ? 18 : x < 760 ? 18 : x > 1340 && x < 1430 ? 18 : 13;
      const r = rnd(), h = 1 + Math.pow(r, x > 262 && x < 400 ? 2 : 4) * amp;
      if (rnd() < .65) vr += `M${x + .5} 1037v-${h}`; else vb += `M${x + .5} 1037v-${h / 2}`;
    }
    '262,896 270,952 279,958 299,977 303,990 332,937 372,996 383,1004 178,1021 145,1022 96,1021 465,1005 516,1006 563,940 585,1012 599,1018 634,962 661,985 690,997 719,1000 735,1018 779,1020 796,1019 833,1018 863,1016 1110,1019 1123,1019 1158,1019 1217,1014 1260,1010 1296,1007 1382,1010 1412,998 1416,1008 1428,1012 1574,1003 1587,1010 1645,1003 1656,1005 1685,985 1678,1013 1734,1008 1736,1009 1744,1004 1750,1008 1773,1020 1832,1021'
      .split(' ').forEach(p => { const [x, y] = p.split(','); vr += `M${+x + .5} 1037V${y}`; });
    '178,1021 276,1012 334,1018 690,1018 719,1018 1412,1018 1685,1022 1820,1023 1744,1018'.split(' ').forEach(p => { const [x, y] = p.split(','); vb += `M${+x + .5} 1037V${y}`; });
    sub.push(`<path d="${vr}" stroke="#e81a0c"/><path d="${vb}" stroke="#1058c8"/><path d="M49 1036.500H1853" stroke="#1058c8" stroke-dasharray="3 2"/>`);

    // oscillator
    const OSC = '49,957 60,956 73,952 90,953 97,962 110,957 140,952 158,954 165,961 175,957 178,972 190,952 205,957 225,954 240,958 261,960 262,1015 266,1015 270,990 280,975 285,940 290,960 296,975 300,1000 307,925 312,950 318,970 323,955 330,955 333,900 338,910 345,925 352,945 360,935 367,970 373,945 380,955 388,992 394,970 398,945 403,950 411,932 420,945 426,938 433,950 440,960 450,970 456,955 466,935 475,950 487,962 495,968 505,958 518,965 530,952 535,962 545,945 550,940 557,950 565,975 572,957 585,965 600,955 618,948 625,955 632,965 636,980 642,962 655,950 661,918 667,930 675,950 690,965 691,983 694,965 705,952 717,950 719,922 723,945 733,960 743,977 752,960 770,953 785,963 795,957 812,965 825,952 832,950 845,952 862,963 880,952 900,955 920,952 935,960 955,955 975,955 998,952 1020,957 1050,955 1060,955 1079,950 1090,957 1105,958 1112,972 1118,957 1150,953 1162,965 1180,955 1195,958 1210,950 1218,967 1225,965 1235,950 1255,955 1260,948 1270,955 1290,955 1296,968 1310,953 1330,948 1344,960 1357,950 1370,960 1378,955 1383,985 1392,970 1405,945 1412,915 1420,960 1423,950 1430,970 1447,945 1456,965 1475,953 1500,957 1515,960 1530,945 1550,957 1558,972 1565,960 1575,937 1583,935 1597,945 1612,970 1622,958 1643,956 1647,975 1657,950 1668,960 1675,970 1683,960 1685,978 1690,955 1708,945 1722,957 1725,965 1734,960 1735,942 1740,970 1744,983 1750,955 1760,942 1775,950 1790,957 1810,952 1820,960 1828,957 1835,963 1845,955 1853,948';
    let avg = 957, og = '', oc = '', ol = 'M49 957';
    sample(OSC, 1).forEach(([x, y]) => {
      const q = y + (rnd() - .5) * (x > 262 && x < 400 ? 16 : 5);
      avg += (q - avg) * .09;
      if (q < avg) og += `M${x + .5} ${q}V${avg}`; else oc += `M${x + .5} ${q}V${avg}`;
      ol += `L${x} ${q}`;
    });
    sub.push(`<path d="${oc}" stroke="#ccffff"/><path d="${og}" stroke="#008830"/><path d="${ol}" fill="none" stroke="#008830"/>`);

    // balance line with its average
    const TAIL = '1130,1013 1165,1017 1220,1019 1235,1022 1280,1019 1315,1020 1345,1015 1372,1011 1395,1015 1425,1015 1460,1020 1480,1020 1560,1020 1575,1021 1590,1016 1610,1014 1640,1014 1660,1018 1700,1021 1725,1022 1745,1032 1765,1033 1800,1034 1853,1033';
    const FAST = '49,899 95,897 130,899 165,897 190,900 255,899 262,900 267,912 273,923 290,922 297,930 315,930 330,949 360,948 375,958 395,966 415,965 440,960 455,965 480,960 520,964 540,974 565,974 580,983 620,985 638,1000 660,1001 673,993 692,995 705,998 740,1000 790,1003 815,1010 860,1014 1050,1013 1100,1010 ' + TAIL;
    const MEAN = '49,899 95,897 130,899 165,897 190,899 255,899 262,900 281,912 295,921 320,930 333,938 350,947 375,952 397,960 425,965 460,962 500,960 530,966 560,972 600,983 625,985 640,990 663,998 690,994 730,998 780,1001 810,1005 840,1011 870,1014 930,1014 1050,1013 1100,1010 1130,1012 1165,1016 1220,1018 1240,1020 1280,1019 1315,1020 1345,1017 1385,1011 1410,1014 1440,1017 1480,1019 1560,1020 1590,1018 1610,1015 1650,1014 1675,1018 1700,1020 1730,1022 1745,1026 1765,1031 1800,1033 1853,1033';
    const m = sample(MEAN, 1), f = sample(FAST, 1);
    let fill = '';
    m.forEach(([x, y], i) => { if (f[i] && f[i][1] > y) fill += `M${x + .5} ${y}V${f[i][1] + rnd() * 2}`; });
    sub.push(`<path d="${fill}" stroke="#0000ff"/>`);
    curve(sub, FAST, '#ff9900', 3, 'stroke-dasharray="6 5"');
    curve(sub, MEAN, '#993300', 3);
    curve(sub, FAST, '#0000ff', 1);

    // crosshair
    rect(labels, 1344, 77, 1, 961, '#b00028');

    // left scale
    [[116,'12,990'],[172,'12,928'],[228,'12,866'],[283,'12,805'],[339,'12,743'],[395,'12,682'],[450,'12,620'],[508,'12,559'],[564,'12,497'],[621,'12,436'],[680,'12,374'],[736,'12,313'],[794,'12,251'],[852,'12,190']]
      .forEach(([y, s]) => text(47, y + 4, s, '#444', 'text-anchor="end"'));
    [[904,'25,000'],[923,'50,000'],[942,'75,000'],[961,'00,000'],[979,'25,000'],[998,'50,000'],[1017,'75,000']].forEach(([y, s]) => {
      text(41, y + 4, s, '#444', 'text-anchor="end"');
      rect(labels, 43, y + 1, 6, 1, '#999');
      rect(labels, 46, y + 10, 3, 1, '#999');
    });
    // right scale
    [[110,'70,00'],[204,'65,00'],[391,'55,00'],[484,'50,00'],[578,'45,00'],[672,'40,00'],[765,'35,00'],[859,'30,00']].forEach(([y, s]) => text(1874, y + 3, s, '#444'));
    for (let i = 0; i < 41; i++) rect(labels, 1867, Math.round(110 + i * 18.72), i % 5 ? 2 : 6, 1, '#999');
    [[909,'17,500'],[927,'15,000'],[945,'12,500'],[963,'10,000'],[981,'7,500'],[1000,'5,000'],[1018,'2,500']].forEach(([y, s]) => {
      text(1875, y + 3, s, '#444');
      rect(labels, 1867, y, 6, 1, '#999');
      rect(labels, 1867, y + 9, 2, 1, '#999');
    });
    // time scale
    TIMES.forEach(([x, s], i) => {
      rect(labels, x, 1038, 1, 18, '#999');
      text(x + 2, 1051, s, '#444', i ? '' : 'font-weight="bold"', i ? 11 : 12);
    });
    text(1875, 1051, '15:19:5', '#444');

    // price tags
    function tag(x, y, w, h, fill, stroke) { labels.push(`<rect x="${x + .5}" y="${y + .5}" width="${w}" height="${h}" fill="${fill}" stroke="${stroke}"/>`); }
    tag(8, 281, 36, 27, '#ffd966', '#222'); text(10, 292, '12,791', '#444'); text(43, 305, '+1,03%', '#f00000', 'text-anchor="end"', 10);
    tag(1871, 281, 39, 27, '#ffd966', '#222'); text(1873, 292, '12,791', '#444'); text(1873, 305, '+1,03%', '#f00000');
    tag(10, 675, 33, 11, '#1058c8', '#1058c8'); text(13, 685, '2,370', '#fff'); text(13, 698, ',06%', '#1058c8');
    tag(1871, 675, 39, 12, '#1058c8', '#1058c8'); text(1873, 685, '12,370', '#fff'); text(1874, 698, '-3,06%', '#1058c8');
    tag(1276, 1038, 135, 17, '#ffd966', '#000'); text(1279, 1051, '2025/04/02(수) 13:40:25', '#444', '', 12);

    // captions
    tag(60, 79, 142, 13, '#f0f0f0', '#ccc'); text(63, 91, '대상홀딩스 매물대 수(13)', '#444', '', 13);
    tag(52, 82, 4, 5, '#bbb', '#777');
    text(173, 129, '최고 12,990 (-4,77%, 08:23)', '#f00000', '', 12);
    text(493, 847, '최저 12,190 (1,48%, 10:07)', '#0000e0', '', 12);
    text(1726, 377, '당일시가 12,720 (-0,31%)', '#00e800', '', 12);
    text(1726, 427, '전일종가 12,660 (-0,78%)', '#993300', '', 12);
    text(1868, 88, 'LC:1,48', '#e81a0c', '', 12); text(1868, 100, 'HC:-4,7', '#1058c8', '', 12);
    labels.push('<path d="M12.500 96.500h13v12h-13zM15.500 99.500h7v7h-7zM15.500 102.500h7M18.500 99.500v7" fill="none" stroke="#333"/>');
    labels.push('<rect x="1902" y="885" width="9" height="8" fill="#333"/><path d="M1904 887l5 4m0-4l-5 4" stroke="#fff"/>');

    document.getElementById('back').innerHTML = back.join('');
    document.getElementById('main').innerHTML = main.join('');
    document.getElementById('sub').innerHTML = sub.join('');
    document.getElementById('labels').innerHTML = labels.join('');
  </script>
</body>
</html>
